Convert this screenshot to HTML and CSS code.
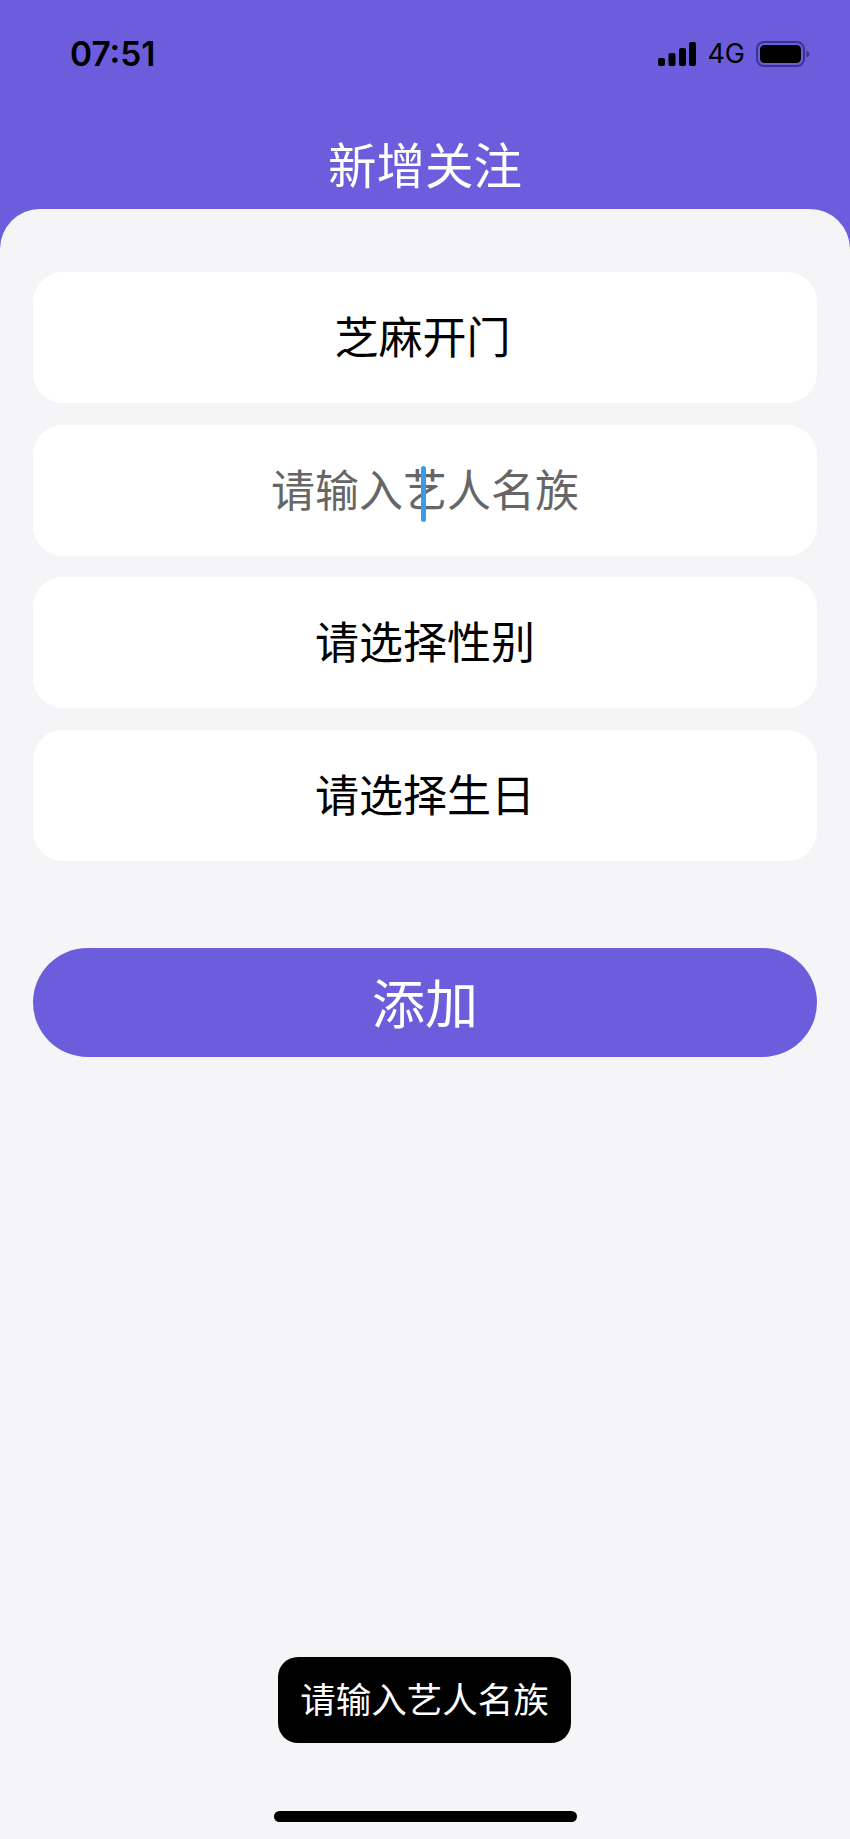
FILE: index.html
```html
<!DOCTYPE html>
<html lang="zh-CN">
<head>
    <meta charset="UTF-8">
    <meta name="viewport" content="width=device-width, initial-scale=1.0">
    <title>新增关注</title>
    <link rel="stylesheet" href="styles.css">
</head>
<body>
    <div class="app">
        <!-- status bar -->
        <div class="status-bar">
            <span class="time">07:51</span>
            <div class="status-icons">
                <svg class="signal" width="38" height="24" viewBox="0 0 38 24">
                    <rect x="0" y="16" width="7" height="8" rx="2"/>
                    <rect x="10.5" y="11" width="7" height="13" rx="2"/>
                    <rect x="21" y="6" width="7" height="18" rx="2"/>
                    <rect x="31" y="0" width="7" height="24" rx="2"/>
                </svg>
                <span class="network">4G</span>
                <svg class="battery" width="54" height="26" viewBox="0 0 54 26">
                    <rect x="1" y="1" width="47" height="24" rx="7" fill="none" stroke="#3b3390" stroke-width="2"/>
                    <rect x="4" y="4" width="41" height="18" rx="4.5" fill="#000"/>
                    <path d="M50.5 9.5 C52.5 10.5 53.5 11.8 53.5 13 C53.5 14.2 52.5 15.5 50.5 16.5 Z" fill="#3b3390"/>
                </svg>
            </div>
        </div>

        <div class="nav-title">新增关注</div>

        <div class="sheet">
            <div class="field field-name">芝麻开门</div>
            <div class="field field-input">
                <span class="placeholder">请输入艺人名族</span>
                <span class="caret"></span>
            </div>
            <div class="field">请选择性别</div>
            <div class="field">请选择生日</div>
            <button class="add-btn">添加</button>

            <div class="toast">请输入艺人名族</div>
            <div class="home-bar"></div>
        </div>
    </div>
</body>
</html>
```

FILE: styles.css
```css
* {
    box-sizing: border-box;
}

body {
    margin: 0;
    background-color: #6c5ddc;
    font-family: "Noto Sans CJK SC", "Noto Sans", sans-serif;
}

.app {
    width: 850px;
    height: 1839px;
    display: flex;
    flex-direction: column;
    overflow: hidden;
}

.status-bar {
    height: 108px;
    padding: 36px 40px 0 70px;
    display: flex;
    justify-content: space-between;
    align-items: flex-start;
    color: #000;
}

.time {
    font-family: Inter, "Liberation Sans", sans-serif;
    font-size: 33.5px;
    font-weight: 600;
    line-height: 36px;
}

.status-icons {
    display: flex;
    align-items: center;
    height: 36px;
}

.signal {
    margin-right: 11px;
}

.network {
    font-family: Inter, "Liberation Sans", sans-serif;
    font-size: 27px;
    line-height: 30px;
    margin-right: 11px;
}

.nav-title {
    height: 101px;
    padding-top: 24px;
    text-align: center;
    color: #fff;
    font-size: 48.5px;
    line-height: 62px;
}

.sheet {
    position: relative;
    flex: 1;
    padding: 63px 33px 0;
    background-color: #f5f5f7;
    border-radius: 40px 40px 0 0;
    display: flex;
    flex-direction: column;
    gap: 21.5px;
}

.field {
    position: relative;
    height: 131px;
    padding-bottom: 5px;
    background-color: #fff;
    border-radius: 30px;
    display: flex;
    justify-content: center;
    align-items: center;
    color: #000;
    font-size: 44px;
}

.field-name {
    padding-right: 5px;
}

.placeholder {
    color: #666;
}

.caret {
    position: absolute;
    left: 388px;
    top: 41px;
    width: 5px;
    height: 56px;
    border-radius: 2.5px;
    background-color: #3a9be8;
}

.add-btn {
    height: 109px;
    margin-top: 66px;
    padding: 0 0 4px;
    border: none;
    border-radius: 55px;
    background-color: #6c5ddc;
    color: #fff;
    font-family: inherit;
    font-size: 53px;
    cursor: pointer;
}

.toast {
    position: absolute;
    left: 278px;
    top: 1448px;
    width: 293px;
    height: 86px;
    padding-bottom: 5px;
    border-radius: 20px;
    background-color: #000;
    color: #fff;
    font-size: 35.5px;
    display: flex;
    justify-content: center;
    align-items: center;
}

.home-bar {
    position: absolute;
    left: 274px;
    top: 1602px;
    width: 303px;
    height: 11px;
    border-radius: 6px;
    background-color: #000;
}
```
